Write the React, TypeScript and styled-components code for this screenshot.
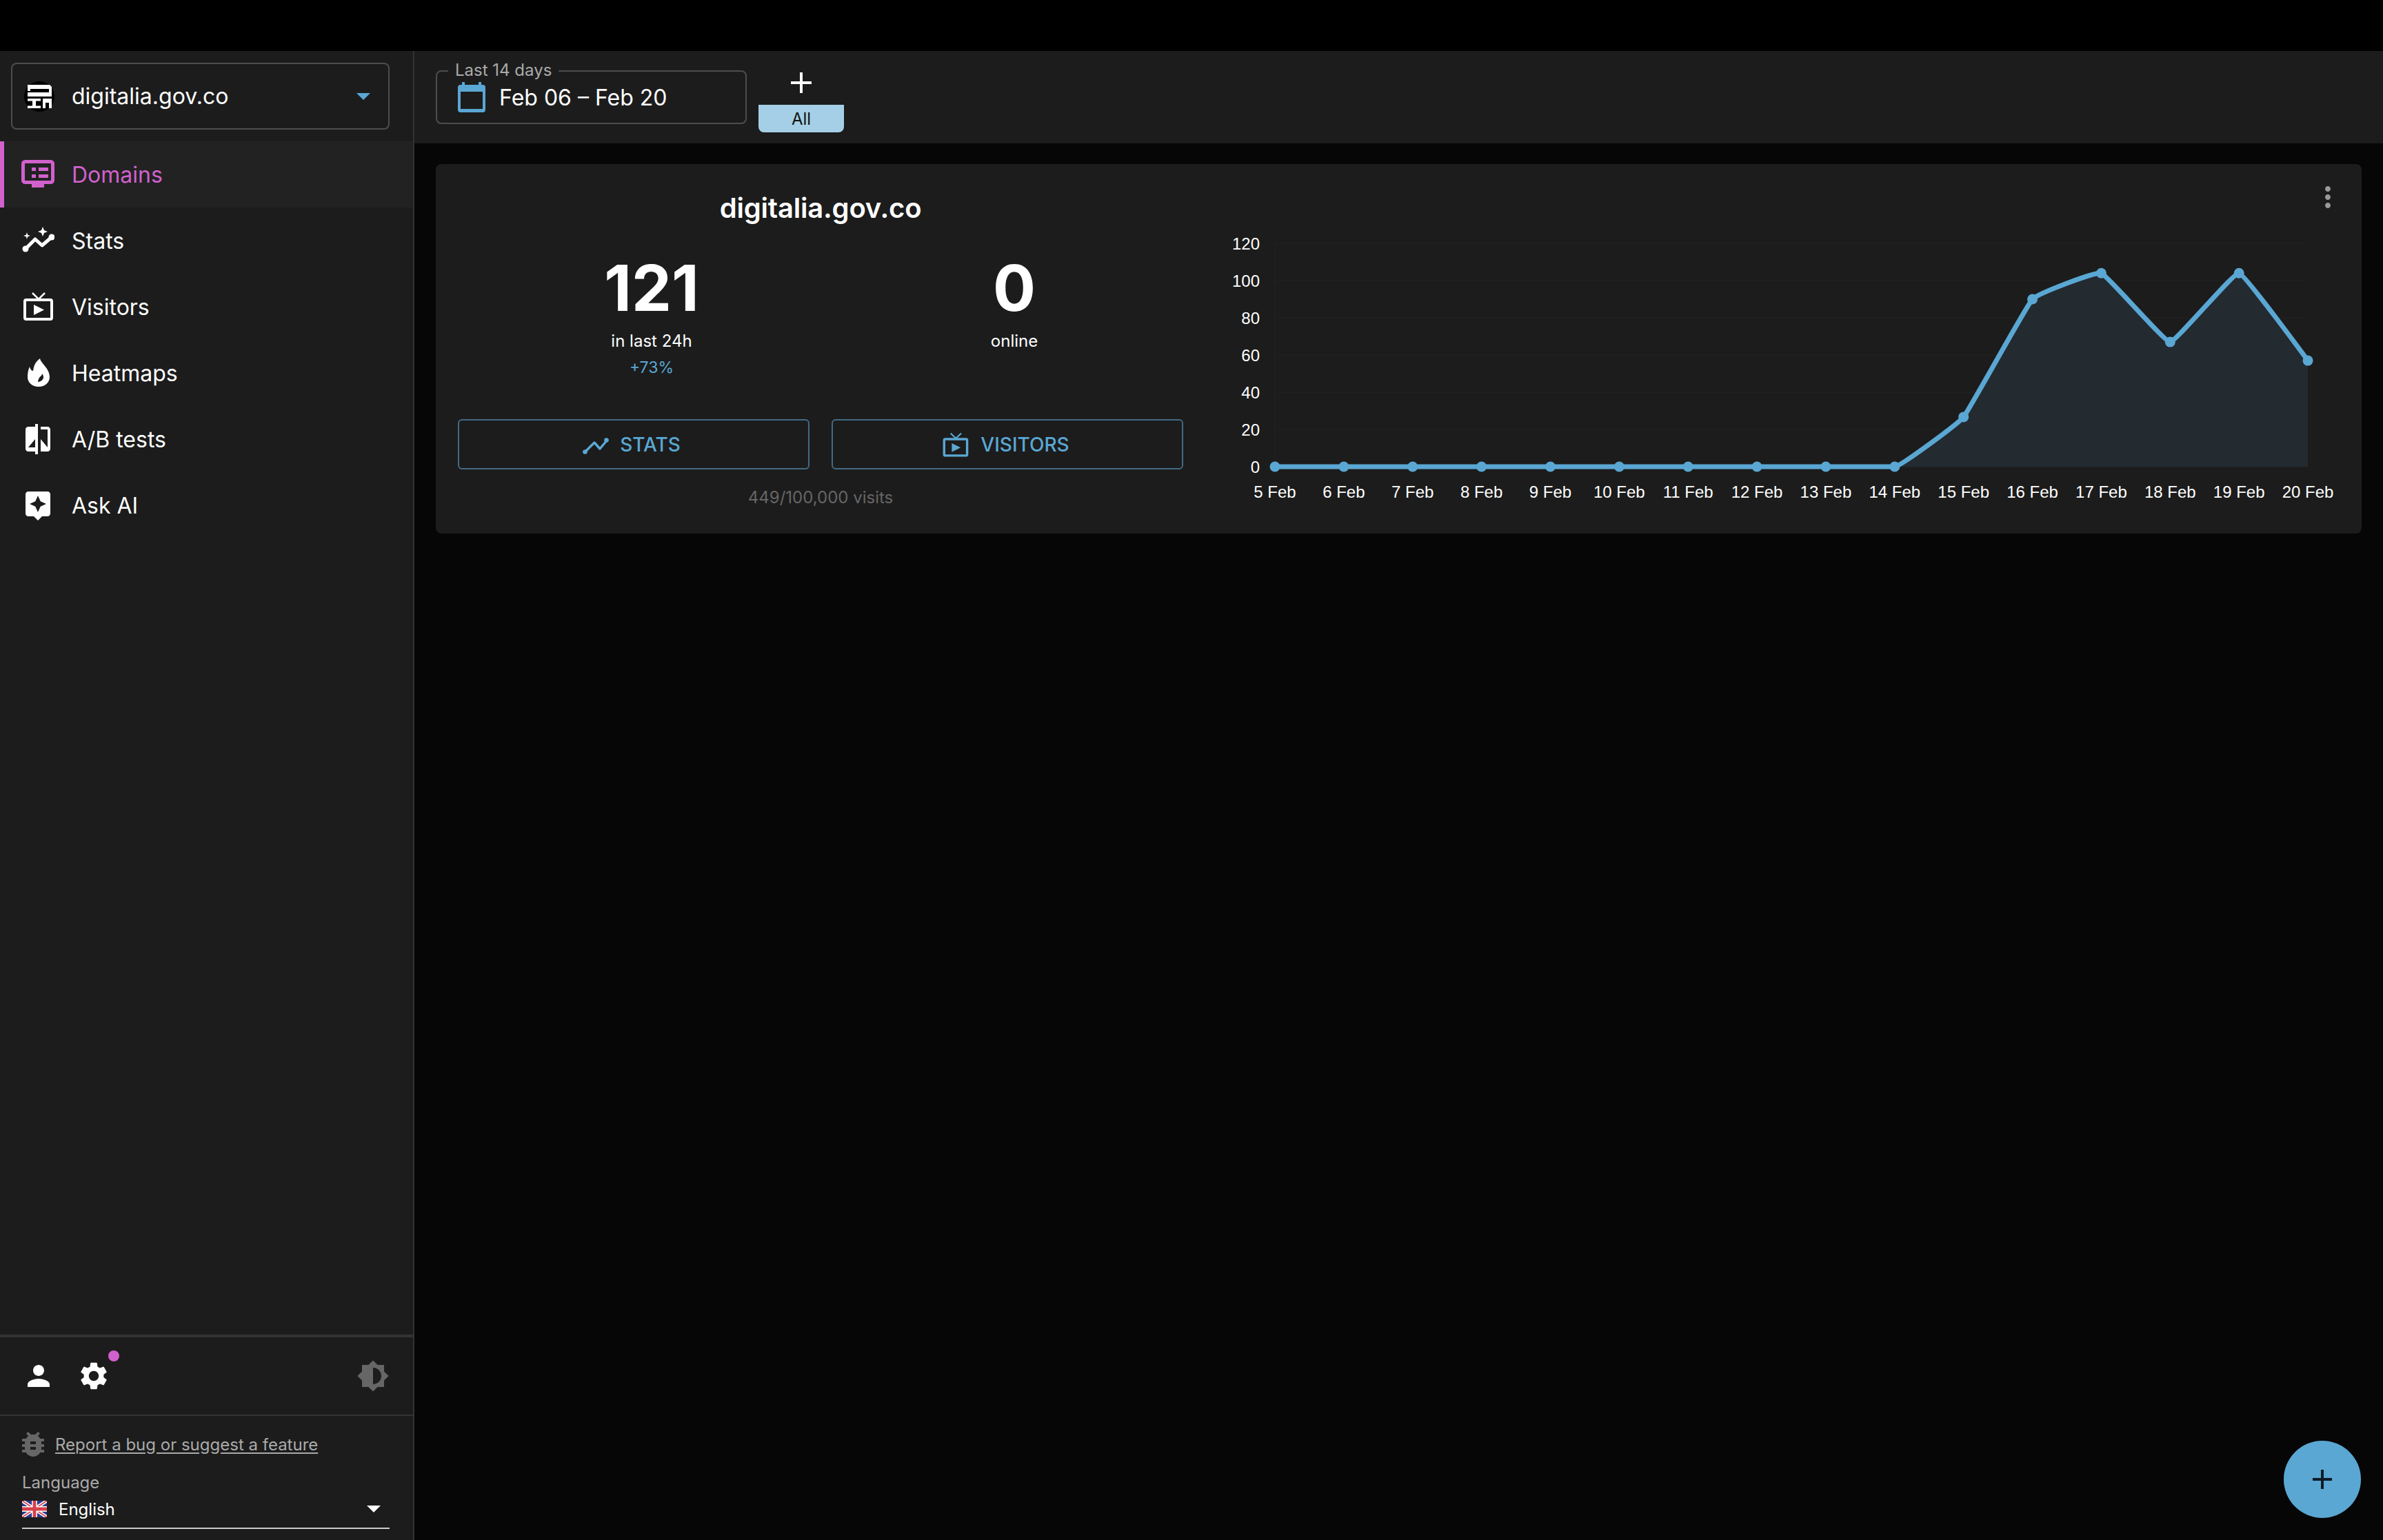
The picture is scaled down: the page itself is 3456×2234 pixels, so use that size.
import React from 'react';
import styled, { createGlobalStyle } from 'styled-components';
import {
  MdCompare,
  MdAssistant,
  MdPerson,
  MdSettings,
  MdBrightness6,
  MdBugReport,
  MdMoreVert,
} from 'react-icons/md';

const BLUE = '#5aa7d3';
const PINK = '#d161cd';
const PANEL = '#1c1c1c';

const Global = createGlobalStyle`
  html, body { margin: 0; padding: 0; background: #060606; }
  body { font-family: Inter, "Noto Sans", sans-serif; color: #fff; }
  * { box-sizing: border-box; }
`;

const Page = styled.div`
  width: 3456px;
  height: 2234px;
  display: flex;
  flex-direction: column;
  overflow: hidden;
  background: #060606;
`;
const TopBar = styled.div`
  height: 74px;
  flex: none;
  background: #000;
`;
const Body = styled.div`
  flex: 1;
  display: flex;
  min-height: 0;
`;

/* sidebar */
const Sidebar = styled.aside`
  width: 601px;
  flex: none;
  display: flex;
  flex-direction: column;
  background: ${PANEL};
  border-right: 2px solid #333;
`;
const SelectWrap = styled.div`
  padding: 17px 34px 17px 16px;
`;
const DomainSelect = styled.div`
  height: 97px;
  border: 2px solid #4d4d4d;
  border-radius: 8px;
  display: flex;
  align-items: center;
  padding: 0 26px 0 15px;
  gap: 23px;
  font-size: 32px;
`;
const SelectText = styled.span`
  flex: 1;
`;
const CaretDown = styled.span<{ $color: string; $w: number }>`
  width: 0;
  height: 0;
  border-left: ${p => p.$w}px solid transparent;
  border-right: ${p => p.$w}px solid transparent;
  border-top: ${p => p.$w}px solid ${p => p.$color};
`;
const Nav = styled.nav`
  flex: 1;
  display: flex;
  flex-direction: column;
`;
const NavItem = styled.div<{ $active?: boolean }>`
  height: 96px;
  display: flex;
  align-items: center;
  gap: 25px;
  padding-left: ${p => (p.$active ? 25 : 31)}px;
  font-size: 32px;
  color: ${p => (p.$active ? PINK : '#fff')};
  background: ${p => (p.$active ? '#222222' : 'transparent')};
  border-left: ${p => (p.$active ? `6px solid ${PINK}` : 'none')};
`;
const IconBox = styled.span`
  width: 48px;
  height: 48px;
  flex: none;
  display: flex;
  align-items: center;
  justify-content: center;
  svg { display: block; }
`;
const Toolbar = styled.div`
  height: 118px;
  flex: none;
  border-top: 4px solid #333;
  border-bottom: 2px solid #333;
  display: flex;
  align-items: center;
  padding: 0 34px 0 32px;
  gap: 32px;
  color: #fff;
`;
const GearBox = styled.span`
  position: relative;
  width: 48px;
  height: 48px;
`;
const Badge = styled.span`
  position: absolute;
  left: 45px;
  top: -13px;
  width: 16px;
  height: 16px;
  border-radius: 50%;
  background: ${PINK};
`;
const ThemeToggle = styled.span`
  margin-left: auto;
  width: 48px;
  height: 48px;
  color: #666;
`;
const Footer = styled.div`
  height: 180px;
  flex: none;
  padding: 17px 34px 0 32px;
  display: flex;
  flex-direction: column;
`;
const BugRow = styled.div`
  display: flex;
  align-items: center;
  gap: 8px;
  margin-left: -8px;
  color: #666;
`;
const BugLink = styled.a`
  font-size: 24px;
  color: #aaa;
  text-decoration: underline;
  text-underline-offset: 3px;
`;
const LangLabel = styled.div`
  font-size: 24px;
  line-height: 32px;
  color: #aaa;
  margin-top: 16px;
`;
const LangSelect = styled.div`
  display: flex;
  align-items: center;
  height: 48px;
  margin-top: 3px;
  padding: 0 13px 8px 0;
  border-bottom: 2px solid #ccc;
  font-size: 24px;
  gap: 17px;
`;

/* main */
const Main = styled.main`
  flex: 1;
  min-width: 0;
  display: flex;
  flex-direction: column;
`;
const Header = styled.header`
  height: 134px;
  flex: none;
  background: ${PANEL};
  padding: 18px 0 0 31px;
  display: flex;
  align-items: flex-start;
  gap: 17px;
`;
const DateField = styled.div`
  position: relative;
  margin-top: 10px;
  width: 451px;
  height: 78px;
  border: 2px solid #4d4d4d;
  border-radius: 8px;
  display: flex;
  align-items: center;
  padding: 0 0 0 30px;
  gap: 20px;
  font-size: 32px;
`;
const Legend = styled.span`
  position: absolute;
  left: 16px;
  top: -18px;
  padding: 0 10px;
  background: ${PANEL};
  font-size: 24px;
  line-height: 32px;
  color: #aaa;
`;
const AddGroup = styled.div`
  width: 124px;
  display: flex;
  flex-direction: column;
`;
const AddButton = styled.div`
  height: 60px;
  padding-bottom: 4px;
  display: flex;
  align-items: center;
  justify-content: center;
`;
const AllTag = styled.div`
  height: 40px;
  display: flex;
  align-items: center;
  justify-content: center;
  background: #a5cfe6;
  color: #111;
  font-size: 24px;
  border-radius: 0 0 8px 8px;
`;
const Content = styled.div`
  flex: 1;
  padding: 30px 31px 0;
`;
const Card = styled.section`
  position: relative;
  height: 536px;
  background: ${PANEL};
  border-radius: 8px;
  display: flex;
`;
const MenuDots = styled.span`
  position: absolute;
  top: 24px;
  right: 25px;
  width: 48px;
  height: 48px;
  color: #999;
`;
const Summary = styled.div`
  width: 1052px;
  margin-left: 32px;
  flex: none;
  padding-top: 40px;
`;
const Title = styled.h2`
  margin: 0;
  font-size: 40px;
  line-height: 48px;
  font-weight: 600;
  letter-spacing: -0.2px;
  text-align: center;
`;
const StatRow = styled.div`
  display: grid;
  grid-template-columns: 526px 526px;
  margin: 44px -18px 0 18px;
  height: 238px;
`;
const Stat = styled.div`
  text-align: center;
`;
const StatValue = styled.div`
  font-size: 92px;
  line-height: 96px;
  font-weight: 700;
`;
const StatLabel = styled.div`
  font-size: 24px;
  line-height: 36px;
  margin-top: 11px;
`;
const StatDelta = styled.div`
  font-size: 23px;
  line-height: 32px;
  margin-top: 4px;
  color: ${BLUE};
`;
const ButtonRow = styled.div`
  display: grid;
  grid-template-columns: 510px 510px;
  gap: 32px;
`;
const OutlineButton = styled.div`
  height: 73px;
  padding: 1px 6px 0 0;
  border: 2px solid #436a84;
  border-radius: 6px;
  display: flex;
  align-items: center;
  justify-content: center;
  gap: 16px;
  color: ${BLUE};
  font-size: 28px;
  font-weight: 500;
  svg { display: block; }
`;
const Usage = styled.div`
  margin-top: 23px;
  font-size: 24px;
  line-height: 36px;
  color: #666;
  text-align: center;
`;
const ChartSvg = styled.svg`
  margin-left: 44px;
  flex: none;
  display: block;
`;
const ChartLabel = styled.text`
  font-family: "Liberation Sans", Arial, sans-serif;
  font-size: 24px;
  fill: #fff;
`;
const Fab = styled.div`
  position: fixed;
  right: 32px;
  bottom: 32px;
  width: 112px;
  height: 112px;
  border-radius: 50%;
  background: ${BLUE};
  display: flex;
  align-items: center;
  justify-content: center;
`;

const LogoIcon = () => (
  <svg width="48" height="48" viewBox="0 0 48 48">
    <circle cx="24" cy="24" r="22" fill="#000" />
    <path
      fill="#fff"
      d="M7 7h32l3 3v14H7v-6h31v-5H11v3H7zM7 27h19v3.500h-7v7h7V41H7v-3.500h7v-7H7zM29 27h13v14h-4v-8h-5v8h-4z"
    />
  </svg>
);
const DomainsIcon = () => (
  <svg width="48" height="48" viewBox="0 0 48 48" fill={PINK}>
    <rect x="2.5" y="5.5" width="43" height="30" rx="3" fill="none" stroke={PINK} strokeWidth="5" />
    <rect x="15" y="38" width="18" height="5" />
    <rect x="15" y="14" width="6" height="5" />
    <rect x="25" y="14" width="14" height="5" />
    <rect x="15" y="24" width="6" height="5" />
    <rect x="25" y="24" width="14" height="5" />
  </svg>
);
const SparkIcon = () => (
  <svg width="48" height="48" viewBox="0 0 48 48" fill="#fff">
    <polyline points="6,36 20,22 30,31 44,19" fill="none" stroke="#fff" strokeWidth="5" strokeLinecap="round" strokeLinejoin="round" />
    <circle cx="6" cy="36" r="4.5" />
    <circle cx="44" cy="19" r="4.5" />
    <path d="M31 4l2 5 5 2-5 2-2 5-2-5-5-2 5-2zM8 12l1.200 3.800L13 17l-3.800 1.200L8 22l-1.200-3.800L3 17l3.800-1.200z" />
  </svg>
);
const FlameIcon = () => (
  <svg width="48" height="48" viewBox="0 0 48 48" fill="#fff">
    <path
      fillRule="evenodd"
      d="M27 3C28 10 41 17 41 30C41 38 34 44 25 44C16 44 9 38 9 30C9 24 10 19 12 15C13 19 15 21 17 21C18 14 20 8 27 3ZM24 37C28 37 32 34 32 30C32 28 31 26 30 25C30 28 27 29 26 31C25 33 24 35 24 37Z"
    />
  </svg>
);
const TrendIcon = () => (
  <svg width="38" height="28" viewBox="0 0 38 28" fill={BLUE}>
    <polyline points="3,25 17,11 25,20 35,8" fill="none" stroke={BLUE} strokeWidth="3.500" strokeLinecap="round" strokeLinejoin="round" />
    <circle cx="3.500" cy="24.500" r="3.300" />
    <circle cx="34.500" cy="7.500" r="3.300" />
  </svg>
);
const TvIcon = ({ color, size }: { color: string; size: number }) => (
  <svg width={size} height={size} viewBox="0 0 48 48" fill={color}>
    <rect x="5" y="14" width="39" height="28" rx="2" fill="none" stroke={color} strokeWidth="4" />
    <polyline points="16,4 25,13 34,4" fill="none" stroke={color} strokeWidth="2.500" />
    <path d="M18 21l15 7.500-15 7.500z" />
  </svg>
);
const CalendarIcon = () => (
  <svg width="40" height="44" viewBox="0 0 40 44" fill={BLUE} style={{ flex: 'none' }}>
    <rect x="6" y="0" width="4" height="8" />
    <rect x="30" y="0" width="4" height="8" />
    <path
      fillRule="evenodd"
      d="M4 4h32a4 4 0 0 1 4 4v32a4 4 0 0 1-4 4H4a4 4 0 0 1-4-4V8a4 4 0 0 1 4-4zM4 14v25h32V14z"
    />
  </svg>
);
const PlusIcon = ({ size, width, color }: { size: number; width: number; color: string }) => (
  <svg width={size} height={size} viewBox={`0 0 ${size} ${size}`} fill={color}>
    <rect x={(size - width) / 2} y="0" width={width} height={size} />
    <rect x="0" y={(size - width) / 2} width={size} height={width} />
  </svg>
);
const UkFlag = () => (
  <svg width="36" height="24" viewBox="0 0 60 40" style={{ flex: 'none', display: 'block' }}>
    <rect width="60" height="40" fill="#2b3a8f" />
    <path d="M0 0L60 40M60 0L0 40" stroke="#fff" strokeWidth="8" />
    <path d="M0 0L60 40M60 0L0 40" stroke="#d8404a" strokeWidth="3" />
    <path d="M30 0V40M0 20H60" stroke="#fff" strokeWidth="13" />
    <path d="M30 0V40M0 20H60" stroke="#d8404a" strokeWidth="8" />
  </svg>
);

const DAYS = ['5 Feb','6 Feb','7 Feb','8 Feb','9 Feb','10 Feb','11 Feb','12 Feb','13 Feb','14 Feb','15 Feb','16 Feb','17 Feb','18 Feb','19 Feb','20 Feb'];
const VALUES = [0,0,0,0,0,0,0,0,0,0,26.7,90,104,67,104,57];
const TICKS = [120,100,80,60,40,20,0];
const X0 = 89;
const STEP = 99.87;
const Y0 = 439;
const UNIT = 2.7;
const TENSION = 0.04;
const pts = VALUES.map((v, i) => ({ x: X0 + i * STEP, y: Y0 - v * UNIT }));

function tangent(i: number) {
  const p = pts[i - 1];
  const n = pts[i + 1];
  if (!p || !n) return { x: 0, y: 0 };
  if (p.y === pts[i].y) return { x: (n.x - p.x) * TENSION, y: 0 };
  return { x: (n.x - p.x) * TENSION, y: (n.y - p.y) * TENSION };
}
function curve(from: number) {
  let d = `M${pts[from].x} ${pts[from].y}`;
  for (let i = from; i < pts.length - 1; i++) {
    const a = tangent(i);
    const b = tangent(i + 1);
    d += `C${pts[i].x + a.x} ${pts[i].y + a.y} ${pts[i + 1].x - b.x} ${pts[i + 1].y - b.y} ${pts[i + 1].x} ${pts[i + 1].y}`;
  }
  return d;
}

const Chart = () => (
  <ChartSvg width="1640" height="536" viewBox="0 0 1640 536">
    {TICKS.map(t => (
      <line key={t} x1={X0} x2={pts[15].x} y1={Y0 - t * UNIT} y2={Y0 - t * UNIT} stroke="#1f1f1f" strokeWidth="2" />
    ))}
    <line x1={X0} x2={X0} y1={Y0 - 120 * UNIT} y2={Y0} stroke="#1f1f1f" strokeWidth="2" />
    <path d={`${curve(9)}L${pts[15].x} ${Y0}L${pts[9].x} ${Y0}Z`} fill="#232a30" />
    <path d={curve(0)} fill="none" stroke={BLUE} strokeWidth="7" />
    {pts.map((p, i) => (
      <circle key={i} cx={p.x} cy={p.y} r="7.500" fill={BLUE} />
    ))}
    {TICKS.map(t => (
      <ChartLabel key={t} x="67" y={Y0 - t * UNIT} dy="8.500" textAnchor="end">{t}</ChartLabel>
    ))}
    {DAYS.map((d, i) => (
      <ChartLabel key={d} x={pts[i].x} y="484" textAnchor="middle">{d}</ChartLabel>
    ))}
  </ChartSvg>
);

export default function App() {
  return (
    <Page>
      <Global />
      <TopBar />
      <Body>
        <Sidebar>
          <SelectWrap>
            <DomainSelect>
              <IconBox><LogoIcon /></IconBox>
              <SelectText>digitalia.gov.co</SelectText>
              <CaretDown $color={BLUE} $w={10} />
            </DomainSelect>
          </SelectWrap>
          <Nav>
            <NavItem $active><IconBox><DomainsIcon /></IconBox>Domains</NavItem>
            <NavItem><IconBox><SparkIcon /></IconBox>Stats</NavItem>
            <NavItem><IconBox><TvIcon color="#fff" size={48} /></IconBox>Visitors</NavItem>
            <NavItem><IconBox><FlameIcon /></IconBox>Heatmaps</NavItem>
            <NavItem><IconBox><MdCompare size={48} /></IconBox>A/B tests</NavItem>
            <NavItem><IconBox><MdAssistant size={48} /></IconBox>Ask AI</NavItem>
          </Nav>
          <Toolbar>
            <IconBox><MdPerson size={48} /></IconBox>
            <GearBox>
              <IconBox><MdSettings size={48} /></IconBox>
              <Badge />
            </GearBox>
            <ThemeToggle><MdBrightness6 size={48} /></ThemeToggle>
          </Toolbar>
          <Footer>
            <BugRow>
              <IconBox><MdBugReport size={48} /></IconBox>
              <BugLink>Report a bug or suggest a feature</BugLink>
            </BugRow>
            <LangLabel>Language</LangLabel>
            <LangSelect>
              <UkFlag />
              <SelectText>English</SelectText>
              <CaretDown $color="#fff" $w={10} />
            </LangSelect>
          </Footer>
        </Sidebar>
        <Main>
          <Header>
            <DateField>
              <Legend>Last 14 days</Legend>
              <CalendarIcon />
              Feb 06 – Feb 20
            </DateField>
            <AddGroup>
              <AddButton><PlusIcon size={30} width={4} color="#fff" /></AddButton>
              <AllTag>All</AllTag>
            </AddGroup>
          </Header>
          <Content>
            <Card>
              <Summary>
                <Title>digitalia.gov.co</Title>
                <StatRow>
                  <Stat>
                    <StatValue>121</StatValue>
                    <StatLabel>in last 24h</StatLabel>
                    <StatDelta>+73%</StatDelta>
                  </Stat>
                  <Stat>
                    <StatValue>0</StatValue>
                    <StatLabel>online</StatLabel>
                  </Stat>
                </StatRow>
                <ButtonRow>
                  <OutlineButton><TrendIcon />STATS</OutlineButton>
                  <OutlineButton><TvIcon color={BLUE} size={41} />VISITORS</OutlineButton>
                </ButtonRow>
                <Usage>449/100,000 visits</Usage>
              </Summary>
              <Chart />
              <MenuDots><MdMoreVert size={48} /></MenuDots>
            </Card>
          </Content>
        </Main>
      </Body>
      <Fab><PlusIcon size={28} width={4} color="#0d1b24" /></Fab>
    </Page>
  );
}
